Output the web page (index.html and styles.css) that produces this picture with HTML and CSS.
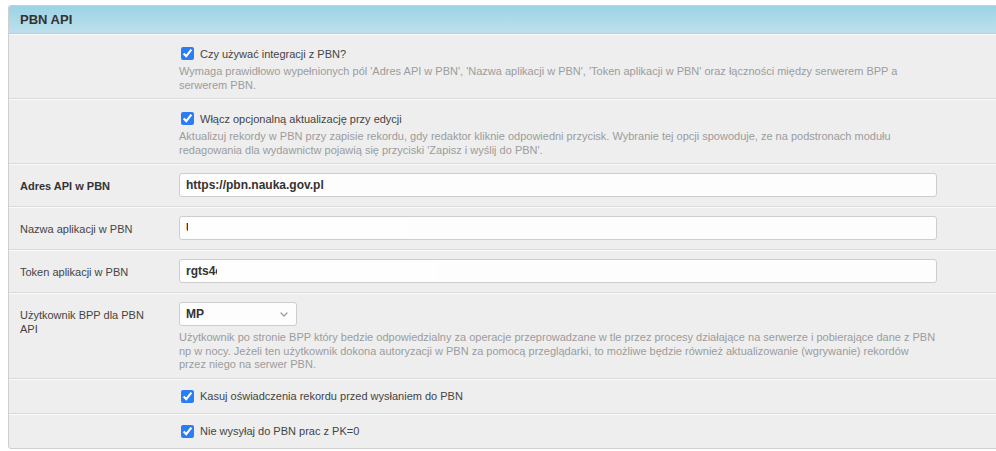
FILE: index.html
```html
<!DOCTYPE html>
<html lang="pl">
<head>
<meta charset="utf-8">
<title>PBN API</title>
<link rel="stylesheet" href="styles.css">
</head>
<body>
<fieldset class="module">
  <h2 class="module-title">PBN API</h2>

  <div class="row row-help">
    <div class="label"></div>
    <div class="field">
      <div class="check-line">
        <input type="checkbox" class="check" checked>
        <span class="check-label">Czy używać integracji z PBN?</span>
      </div>
      <div class="help">Wymaga prawidłowo wypełnionych pól 'Adres API w PBN', 'Nazwa aplikacji w PBN', 'Token aplikacji w PBN' oraz łączności między serwerem BPP a<br>serwerem PBN.</div>
    </div>
  </div>

  <div class="row row-help">
    <div class="label"></div>
    <div class="field">
      <div class="check-line">
        <input type="checkbox" class="check" checked>
        <span class="check-label">Włącz opcjonalną aktualizację przy edycji</span>
      </div>
      <div class="help">Aktualizuj rekordy w PBN przy zapisie rekordu, gdy redaktor kliknie odpowiedni przycisk. Wybranie tej opcji spowoduje, ze na podstronach modułu<br>redagowania dla wydawnictw pojawią się przyciski 'Zapisz i wyślij do PBN'.</div>
    </div>
  </div>

  <div class="row">
    <div class="label label-strong">Adres API w PBN</div>
    <div class="field">
      <div class="input"><span>https://pbn.nauka.gov.pl</span></div>
    </div>
  </div>

  <div class="row">
    <div class="label">Nazwa aplikacji w PBN</div>
    <div class="field">
      <div class="input"><span>U</span><span class="redact redact-name"></span></div>
    </div>
  </div>

  <div class="row">
    <div class="label">Token aplikacji w PBN</div>
    <div class="field">
      <div class="input"><span>rgts4c</span><span class="redact redact-token"></span></div>
    </div>
  </div>

  <div class="row row-select">
    <div class="label">Użytkownik BPP dla PBN API</div>
    <div class="field">
      <div class="select">
        <span>MP</span>
        <svg class="chevron" width="8" height="5" viewBox="0 0 8 5"><polyline points="1,1 4,4 7,1" fill="none" stroke="#9a9a9a" stroke-width="1.3" stroke-linecap="round" stroke-linejoin="round"/></svg>
      </div>
      <div class="help help-select">Użytkownik po stronie BPP który bedzie odpowiedzialny za operacje przeprowadzane w tle przez procesy działające na serwerze i pobierające dane z PBN<br>np w nocy. Jeżeli ten użytkownik dokona autoryzacji w PBN za pomocą przeglądarki, to możliwe będzie również aktualizowanie (wgrywanie) rekordów<br>przez niego na serwer PBN.</div>
    </div>
  </div>

  <div class="row row-check">
    <div class="label"></div>
    <div class="field">
      <div class="check-line">
        <input type="checkbox" class="check" checked>
        <span class="check-label">Kasuj oświadczenia rekordu przed wysłaniem do PBN</span>
      </div>
    </div>
  </div>

  <div class="row row-check row-last">
    <div class="label"></div>
    <div class="field">
      <div class="check-line">
        <input type="checkbox" class="check" checked>
        <span class="check-label">Nie wysyłaj do PBN prac z PK=0</span>
      </div>
    </div>
  </div>
</fieldset>
</body>
</html>
```

FILE: styles.css
```css
html, body {
  margin: 0;
  padding: 0;
  background: #fff;
  overflow: hidden;
}

body {
  font-family: "Liberation Sans", Arial, Helvetica, sans-serif;
  color: #444;
}

.module {
  margin: 5px 0 0 8px;
  padding: 0;
  width: 1000px;
  border: 1px solid #cfcfcf;
  border-radius: 3px 0 0 3px;
  background: #eee;
  min-width: 0;
  box-sizing: border-box;
}

.module-title {
  margin: 0;
  height: 27px;
  line-height: 27px;
  padding-left: 11px;
  font-size: 13px;
  font-weight: bold;
  color: #333;
  background: linear-gradient(#9dd2e4, #bde1ec);
  border-bottom: 1px solid #c5c9cb;
  border-radius: 2px 0 0 0;
}

.row {
  display: flex;
  border-top: 1px solid #fafafa;
  border-bottom: 1px solid #dadada;
  padding: 8px 0 9px;
}

.row-help {
  padding: 10px 0 6px;
}

.row-select {
  padding: 8px 0 6px;
}

.row-check {
  padding: 8px 0 8px;
}

.row-last {
  border-bottom: none;
}

.label {
  width: 135px;
  flex: none;
  padding: 6px 0 0 11px;
  font-size: 11px;
  line-height: 14px;
  color: #444;
}

.label-strong {
  font-weight: bold;
  color: #333;
}

.field {
  margin-left: 24px;
  flex: 1;
}

.check-line {
  display: flex;
  align-items: center;
  height: 17px;
}

.check {
  margin: 0 6px 0 2px;
  width: 13px;
  height: 13px;
  accent-color: #2b7df5;
}

.check-label {
  font-size: 11px;
  color: #444;
}

.help {
  margin-top: 3px;
  font-size: 11px;
  line-height: 13.5px;
  color: #9c9c9c;
  white-space: nowrap;
}

.help-select {
  margin-top: 5px;
}

.input {
  position: relative;
  width: 758px;
  height: 24px;
  box-sizing: border-box;
  border: 1px solid #cdcdcd;
  border-radius: 3px;
  background: #fdfdfd;
  padding: 0 6px;
  font-size: 12px;
  font-weight: bold;
  line-height: 22px;
  color: #333;
  overflow: hidden;
}

.redact {
  position: absolute;
  top: 2px;
  bottom: 2px;
  width: 220px;
  background: #fefefe;
}

.redact-name {
  left: 8px;
}

.redact-token {
  left: 37px;
}

.select {
  position: relative;
  display: flex;
  align-items: center;
  justify-content: space-between;
  width: 118px;
  height: 24px;
  box-sizing: border-box;
  border: 1px solid #cdcdcd;
  border-radius: 3px;
  background: #fdfdfd;
  padding: 0 8px 0 6px;
  font-size: 12px;
  font-weight: bold;
  color: #333;
}

.chevron {
  display: block;
}
```
